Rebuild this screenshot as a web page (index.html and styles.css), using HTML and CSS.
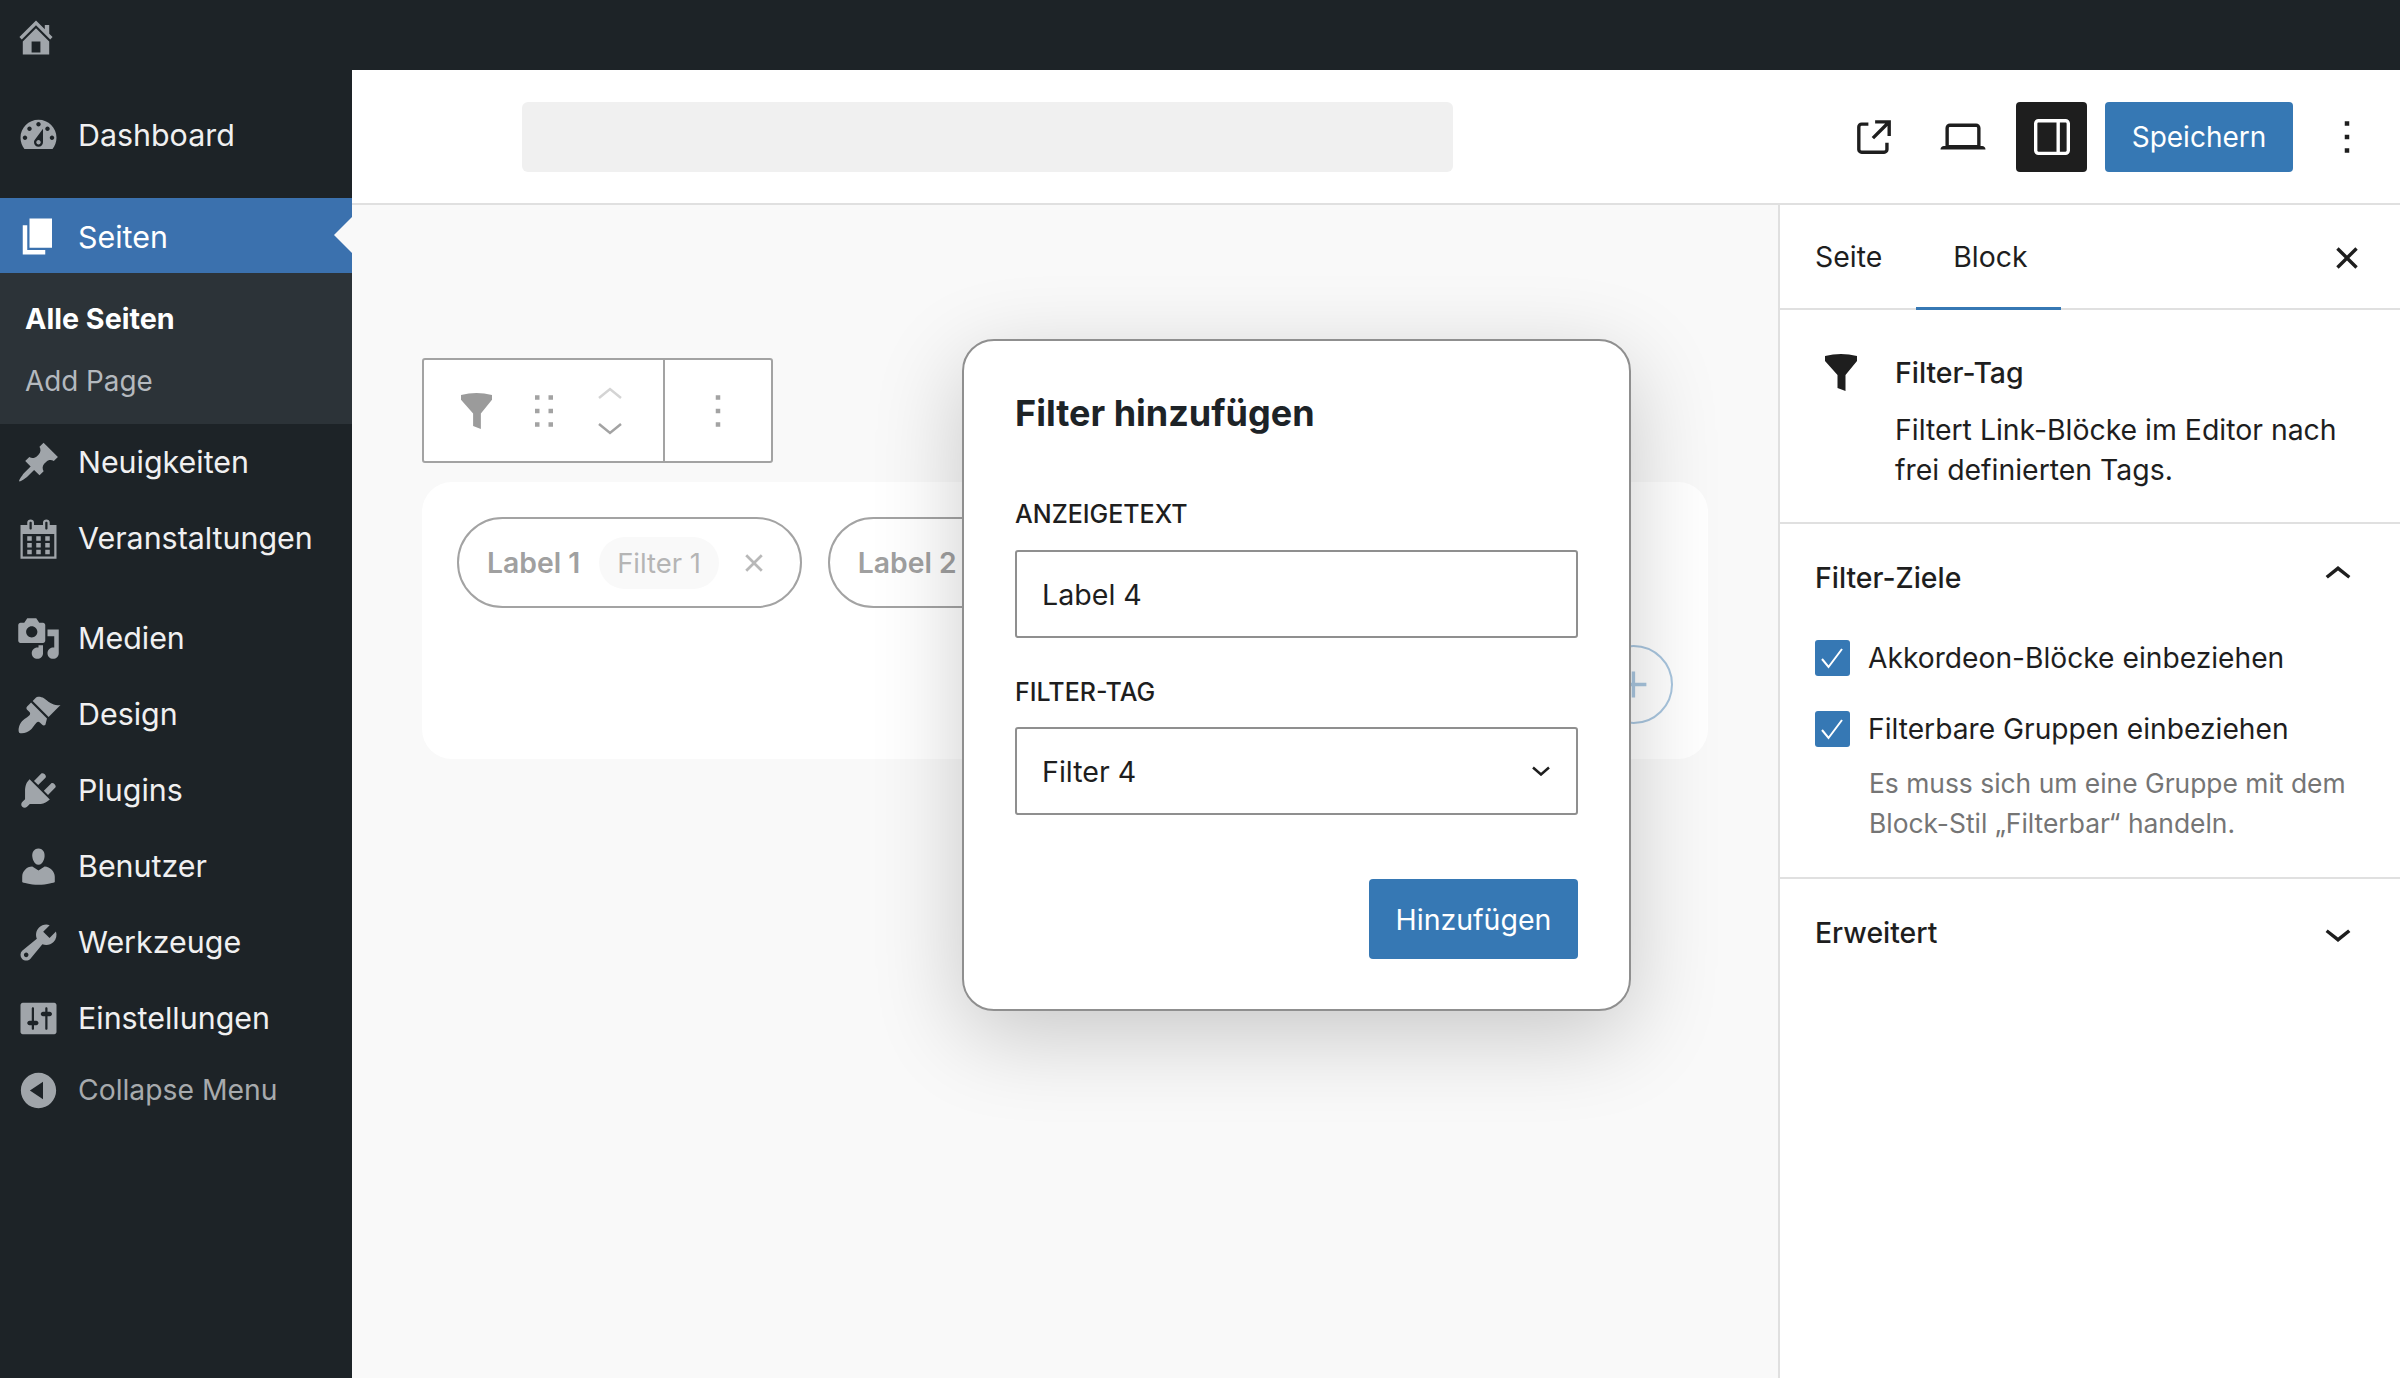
FILE: index.html
```html
<!doctype html>
<html lang="de">
  <head>
    <meta charset="utf-8">
    <title>Filter hinzufügen</title>
    <link rel="stylesheet" href="styles.css">
  </head>
  <body>
    <div class="topbar">
      <svg class="home-icon" viewBox="0 0 20 20"><path d="M16 8.5l1.53 1.53-1.06 1.06L10 4.62l-6.47 6.47-1.06-1.06L10 2.5l4 4v-2h2v4zm-6-2.46l6 5.99V18H4v-5.97zM12 17v-5H8v5h4z"/></svg>
    </div>

    <div class="app">
      <nav class="adminmenu">
        <a class="menu-item dashboard">
          <svg class="menu-icon" viewBox="0 0 20 20"><path d="M3.76 16h12.48c1.1-1.37 1.76-3.11 1.76-5 0-4.42-3.58-8-8-8s-8 3.58-8 8c0 1.89.66 3.63 1.76 5zM10 4c.55 0 1 .45 1 1s-.45 1-1 1-1-.45-1-1 .45-1 1-1zM6 6c.55 0 1 .45 1 1s-.45 1-1 1-1-.45-1-1 .45-1 1-1zm8 0c.55 0 1 .45 1 1s-.45 1-1 1-1-.45-1-1 .45-1 1-1zm-5.37 5.55L12 7v6c0 1.1-.9 2-2 2s-2-.9-2-2c0-.57.24-1.08.63-1.45zM4 10c.55 0 1 .45 1 1s-.45 1-1 1-1-.45-1-1 .45-1 1-1zm12 0c.55 0 1 .45 1 1s-.45 1-1 1-1-.45-1-1 .45-1 1-1zm-5 3c0-.55-.45-1-1-1s-1 .45-1 1 .45 1 1 1 1-.45 1-1z"/></svg>
          Dashboard
        </a>
        <a class="menu-item current">
          <svg class="menu-icon" viewBox="0 0 20 20"><path d="M6 15V2h10v13H6zm-1 1h8v2H3V5h2v11z"/></svg>
          Seiten
        </a>
        <div class="submenu">
          <a class="sub-item active">Alle Seiten</a>
          <a class="sub-item">Add Page</a>
        </div>
        <a class="menu-item">
          <svg class="menu-icon" viewBox="0 0 20 20"><path d="M10.44 3.02l1.82-1.82 6.36 6.35-1.83 1.82c-1.05-.68-2.48-.57-3.41.36l-.75.75c-.92.93-1.04 2.35-.35 3.41l-1.83 1.82-2.41-2.41-2.8 2.79c-.42.42-3.38 2.71-3.8 2.29s1.86-3.39 2.28-3.81l2.79-2.79L4.1 9.36l1.83-1.82c1.05.69 2.48.57 3.4-.36l.75-.75c.93-.92 1.05-2.35.36-3.41z"/></svg>
          Neuigkeiten
        </a>
        <a class="menu-item">
          <svg class="menu-icon" viewBox="0 0 20 20"><path d="M15 4h3v15H2V4h3V3c0-.41.15-.76.44-1.06.29-.29.65-.44 1.06-.44s.77.15 1.06.44c.29.3.44.65.44 1.06v1h4V3c0-.41.15-.76.44-1.06.29-.29.65-.44 1.06-.44s.77.15 1.06.44c.29.3.44.65.44 1.06v1zM6 3v2.5c0 .14.05.26.15.36.09.09.21.14.35.14s.26-.05.35-.14c.1-.1.15-.22.15-.36V3c0-.14-.05-.26-.15-.35-.09-.1-.21-.15-.35-.15s-.26.05-.35.15c-.1.09-.15.21-.15.35zm7 0v2.5c0 .14.05.26.14.36.1.09.22.14.36.14s.26-.05.36-.14c.09-.1.14-.22.14-.36V3c0-.14-.05-.26-.14-.35-.1-.1-.22-.15-.36-.15s-.26.05-.36.15c-.09.09-.14.21-.14.35zm4 15V8H3v10h14zM7 9v2H5V9h2zm2 0h2v2H9V9zm4 2V9h2v2h-2zm-6 1v2H5v-2h2zm2 0h2v2H9v-2zm4 2v-2h2v2h-2zm-6 1v2H5v-2h2zm4 2H9v-2h2v2zm4 0h-2v-2h2v2z"/></svg>
          Veranstaltungen
        </a>
        <a class="menu-item group-start">
          <svg class="menu-icon" viewBox="0 0 20 20"><path d="M13 11V4c0-.55-.45-1-1-1h-1.67L9 1H5L3.67 3H2c-.55 0-1 .45-1 1v7c0 .55.45 1 1 1h10c.55 0 1-.45 1-1zM7 4.5c1.38 0 2.5 1.12 2.5 2.5S8.38 9.5 7 9.5 4.5 8.38 4.5 7 5.62 4.5 7 4.5zM14 6h5v10.5c0 1.38-1.12 2.5-2.5 2.5S14 17.88 14 16.5s1.12-2.5 2.5-2.5c.17 0 .34.02.5.05V9h-3V6zm-4 8.05V13h2v3.5c0 1.38-1.12 2.5-2.5 2.5S7 17.88 7 16.5 8.12 14 9.5 14c.17 0 .34.02.5.05z"/></svg>
          Medien
        </a>
        <a class="menu-item">
          <svg class="menu-icon" viewBox="0 0 20 20"><path d="M14.48 11.06L7.41 3.99l1.5-1.5c.5-.56 2.3-.47 3.51.32 1.21.8 1.43 1.28 2.91 2.1 1.18.64 2.45 1.26 4.45.85zm-.71.71L6.7 4.7 4.93 6.47c-.39.39-.39 1.02 0 1.41l1.06 1.06c.39.39.39 1.03 0 1.42-.6.6-1.43 1.11-2.21 1.69-.35.26-.7.53-1.01.84-1.34 1.34-2 3.93-1.37 5.21 1.28.63 3.86-.03 5.25-1.38.31-.31.58-.66.84-1.01.58-.78 1.09-1.6 1.69-2.21.39-.39 1.03-.39 1.42 0l1.06 1.06c.39.39 1.02.39 1.41 0z"/></svg>
          Design
        </a>
        <a class="menu-item">
          <svg class="menu-icon" viewBox="0 0 20 20"><path d="M13.11 4.36L9.87 7.6 8 5.73l3.24-3.24c.35-.34 1.05-.2 1.56.32.52.51.66 1.21.31 1.55zm-8 1.77l.91-1.12 9.01 9.01-1.19.84c-.71.71-2.63 1.16-3.82 1.16H6.14L4.9 17.26c-.59.59-1.54.59-2.12 0-.59-.58-.59-1.53 0-2.12l1.24-1.24v-3.88c0-1.13.4-3.19 1.09-3.89zm7.26 3.97l3.24-3.24c.34-.35 1.04-.21 1.55.31.52.51.66 1.21.31 1.55l-3.24 3.25z"/></svg>
          Plugins
        </a>
        <a class="menu-item">
          <svg class="menu-icon" viewBox="0 0 20 20"><path d="M10 9.25c-2.27 0-2.73-3.44-2.73-3.44C7 4.02 7.82 2 9.97 2c2.16 0 2.98 2.02 2.71 3.81 0 0-.41 3.44-2.68 3.44zm0 2.57L12.72 10c2.39 0 4.52 2.33 4.52 4.53v2.49s-3.65 1.13-7.24 1.13c-3.65 0-7.24-1.13-7.24-1.13v-2.49c0-2.25 1.94-4.48 4.47-4.48z"/></svg>
          Benutzer
        </a>
        <a class="menu-item">
          <svg class="menu-icon" viewBox="0 0 20 20"><path d="M16.68 9.77c-1.34 1.34-3.3 1.67-4.95.99l-5.41 6.52c-.99.99-2.59.99-3.58 0s-.99-2.59 0-3.57l6.52-5.42c-.68-1.65-.35-3.61.99-4.95 1.28-1.28 3.12-1.62 4.72-1.06l-2.89 2.89 2.82 2.82 2.86-2.87c.53 1.58.18 3.39-1.08 4.65zM3.81 16.21c.4.39 1.04.39 1.43 0 .4-.4.4-1.04 0-1.43-.39-.4-1.03-.4-1.43 0-.39.39-.39 1.03 0 1.43z"/></svg>
          Werkzeuge
        </a>
        <a class="menu-item">
          <svg class="menu-icon" viewBox="0 0 20 20"><path d="M18 16V4c0-.55-.45-1-1-1H3c-.55 0-1 .45-1 1v12c0 .55.45 1 1 1h14c.55 0 1-.45 1-1zM8 11h1c.55 0 1 .45 1 1s-.45 1-1 1H8v1.5c0 .28-.22.5-.5.5s-.5-.22-.5-.5V13H6c-.55 0-1-.45-1-1s.45-1 1-1h1V5.5c0-.28.22-.5.5-.5s.5.22.5.5V11zm5-2h-1c-.55 0-1-.45-1-1s.45-1 1-1h1V5.5c0-.28.22-.5.5-.5s.5.22.5.5V7h1c.55 0 1 .45 1 1s-.45 1-1 1h-1v5.5c0 .28-.22.5-.5.5s-.5-.22-.5-.5V9z"/></svg>
          Einstellungen
        </a>
        <a class="menu-item collapse">
          <svg class="menu-icon" viewBox="0 0 20 20"><path d="M10 2.16c4.33 0 7.84 3.51 7.84 7.84s-3.51 7.84-7.84 7.84S2.16 14.33 2.16 10 5.71 2.16 10 2.16zm2 11.72V6.12L6.18 9.97z"/></svg>
          Collapse Menu
        </a>
      </nav>

      <div class="editor">
        <header class="editor-head">
          <div class="title-box"></div>
          <div class="head-tools">
            <button class="icon-btn">
              <svg viewBox="0 0 24 24"><path d="M19.5 4.5h-7V6h4.44l-5.97 5.97 1.06 1.06L18 7.06v4.44h1.5v-7Zm-13 1a2 2 0 0 0-2 2v10a2 2 0 0 0 2 2h10a2 2 0 0 0 2-2v-3H17v3a.5.5 0 0 1-.5.5h-10a.5.5 0 0 1-.5-.5v-10a.5.5 0 0 1 .5-.5h3V5.5h-3Z"/></svg>
            </button>
            <button class="icon-btn">
              <svg viewBox="0 0 24 24"><path d="M20.5 16h-.7V8c0-1.1-.9-2-2-2H6.2c-1.1 0-2 .9-2 2v8h-.7c-.8 0-1.5.7-1.5 1.5h20c0-.8-.7-1.5-1.5-1.5zM5.7 8c0-.3.2-.5.5-.5h11.6c.3 0 .5.2.5.5v7.6H5.7V8z"/></svg>
            </button>
            <button class="icon-btn pressed">
              <svg viewBox="0 0 24 24"><path fill-rule="evenodd" d="M18 4H6c-1.1 0-2 .9-2 2v12c0 1.1.9 2 2 2h12c1.1 0 2-.9 2-2V6c0-1.1-.9-2-2-2zm-4 14.5H6c-.3 0-.5-.2-.5-.5V6c0-.3.2-.5.5-.5h8v13zm4.5-.5c0 .3-.2.5-.5.5h-2.5v-13H18c.3 0 .5.2.5.5v12z"/></svg>
            </button>
            <button class="primary save">Speichern</button>
            <button class="icon-btn more">
              <svg viewBox="0 0 24 24"><path d="M13 19h-2v-2h2v2zm0-6h-2v-2h2v2zm0-6h-2V5h2v2z"/></svg>
            </button>
          </div>
        </header>

        <div class="editor-body">
          <main class="canvas">
            <div class="block-toolbar">
              <div class="toolbar-main">
                <svg class="tb-funnel" viewBox="0 0 32 38"><path d="M0 3Q16-1 32 3V8L20.5 22V38L12.5 35V22L0 8Z"/></svg>
                <svg class="tb-drag" viewBox="0 0 24 24"><path d="M8 7h2V5H8v2zm0 6h2v-2H8v2zm0 6h2v-2H8v2zm6-14v2h2V5h-2zm0 8h2v-2h-2v2zm0 6h2v-2h-2v2z"/></svg>
                <div class="tb-mover">
                  <svg class="mover-up" viewBox="0 0 24 12"><path d="M1 11L12 2 23 11"/></svg>
                  <svg class="mover-down" viewBox="0 0 24 12"><path d="M1 1L12 10 23 1"/></svg>
                </div>
              </div>
              <div class="toolbar-more">
                <svg viewBox="0 0 24 24"><path d="M13 19h-2v-2h2v2zm0-6h-2v-2h2v2zm0-6h-2V5h2v2z"/></svg>
              </div>
            </div>

            <div class="filter-card">
              <div class="chip-row">
                <div class="chip">
                  <span class="chip-label">Label 1</span>
                  <span class="chip-tag">Filter 1</span>
                  <svg class="chip-close" viewBox="0 0 24 24"><path d="M12 13.06l3.712 3.713 1.061-1.06L13.061 12l3.712-3.712-1.06-1.06L12 10.938 8.288 7.227l-1.061 1.06L10.939 12l-3.712 3.712 1.06 1.061L12 13.061z"/></svg>
                </div>
                <div class="chip">
                  <span class="chip-label">Label 2</span>
                  <span class="chip-tag">Filter 2</span>
                </div>
              </div>
              <div class="add-row">
                <div class="add-circle">
                  <svg viewBox="0 0 24 24"><path d="M11 12.5V17.5H12.5V12.5H17.5V11H12.5V6H11V11H6V12.5H11Z"/></svg>
                </div>
              </div>
            </div>

            <div class="modal">
              <h2 class="modal-title">Filter hinzufügen</h2>
              <div class="field-label first">Anzeigetext</div>
              <div class="field">Label 4</div>
              <div class="field-label">Filter-Tag</div>
              <div class="field select">
                Filter 4
                <svg viewBox="0 0 20 10"><path d="M2 1.5L10 8.5 18 1.5"/></svg>
              </div>
              <div class="modal-actions">
                <button class="primary add">Hinzufügen</button>
              </div>
            </div>
          </main>

          <aside class="panel">
            <div class="tabs">
              <span class="tab">Seite</span>
              <span class="tab selected">Block</span>
              <svg class="tabs-close" viewBox="0 0 24 24"><path d="M12 13.06l3.712 3.713 1.061-1.06L13.061 12l3.712-3.712-1.06-1.06L12 10.938 8.288 7.227l-1.061 1.06L10.939 12l-3.712 3.712 1.06 1.061L12 13.061z"/></svg>
            </div>

            <section class="block-card">
              <svg class="card-funnel" viewBox="0 0 32 38"><path d="M0 3Q16-1 32 3V8L20.5 22V38L12.5 35V22L0 8Z"/></svg>
              <div>
                <div class="card-title">Filter-Tag</div>
                <p class="card-desc">Filtert Link-Blöcke im Editor nach frei definierten Tags.</p>
              </div>
            </section>

            <section class="panel-section">
              <div class="section-head">
                Filter-Ziele
                <svg viewBox="0 0 24 24"><path d="M6.5 12.4L12 8l5.5 4.4-.9 1.2L12 10l-4.5 3.6-1-1.2z"/></svg>
              </div>
              <label class="check-row first">
                <span class="checkbox"><svg viewBox="0 0 35 35"><path d="M7 19L13.5 27 27 9"/></svg></span>
                Akkordeon-Blöcke einbeziehen
              </label>
              <label class="check-row">
                <span class="checkbox"><svg viewBox="0 0 35 35"><path d="M7 19L13.5 27 27 9"/></svg></span>
                Filterbare Gruppen einbeziehen
              </label>
              <p class="help">Es muss sich um eine Gruppe mit dem Block-Stil „Filterbar“ handeln.</p>
            </section>

            <section class="panel-section closed">
              <div class="section-head">
                Erweitert
                <svg viewBox="0 0 24 24"><path d="M17.5 11.6L12 16l-5.5-4.4.9-1.2L12 14l4.5-3.6 1 1.2z"/></svg>
              </div>
            </section>
          </aside>
        </div>
      </div>
    </div>
  </body>
</html>
```

FILE: styles.css
```css
* {
  box-sizing: border-box;
}
html, body {
  height: 100%;
}
body {
  margin: 0;
  display: flex;
  flex-direction: column;
  overflow: hidden;
  font-family: Inter, "Noto Sans", sans-serif;
  color: #1e1e1e;
  background: #1d2327;
}
button {
  font-family: inherit;
  border: 0;
  padding: 0;
  background: none;
}

.topbar {
  height: 70px;
  flex: none;
  padding: 15px 0 0 14px;
  background: #1d2327;
}
.home-icon {
  display: block;
  width: 44px;
  height: 44px;
  fill: #a0a5aa;
}

.app {
  flex: 1;
  display: flex;
  min-height: 0;
}

/* admin menu */
.adminmenu {
  width: 352px;
  flex: none;
  background: #1d2327;
}
.menu-item {
  position: relative;
  display: flex;
  align-items: center;
  gap: 17px;
  height: 76px;
  padding-left: 16px;
  font-size: 30.4px;
  color: #f0f0f1;
}
.menu-icon {
  width: 45px;
  height: 45px;
  flex: none;
  fill: #a0a5aa;
}
.dashboard {
  height: 128px;
  padding-top: 2px;
}
.current {
  height: 75px;
  padding-top: 2px;
  color: #fff;
  background: #3b71ae;
}
.current .menu-icon {
  fill: #fff;
}
.current::after {
  content: "";
  position: absolute;
  right: 0;
  top: 19px;
  border: 18px solid transparent;
  border-right-color: #f9f9f9;
  border-left-width: 0;
}
.submenu {
  height: 151px;
  padding-top: 14px;
  background: #2c3338;
}
.sub-item {
  display: block;
  height: 63px;
  line-height: 63px;
  padding-left: 25px;
  font-size: 27.8px;
  color: #b4b9be;
}
.sub-item.active {
  font-size: 28.7px;
  font-weight: 700;
  color: #fff;
}
.group-start {
  margin-top: 24px;
}
.collapse {
  height: 68px;
  color: #a7aaad;
  font-size: 28.3px;
}

/* editor */
.editor {
  flex: 1;
  display: flex;
  flex-direction: column;
  min-width: 0;
  background: #fff;
}
.editor-head {
  height: 135px;
  flex: none;
  display: flex;
  align-items: center;
  justify-content: space-between;
  padding-left: 170px;
  border-bottom: 2px solid #e0e0e0;
}
.title-box {
  width: 931px;
  height: 70px;
  border-radius: 6px;
  background: #f0f0f0;
}
.head-tools {
  display: flex;
  align-items: center;
  gap: 18px;
  padding-right: 18px;
}
.icon-btn {
  width: 71px;
  height: 70px;
  display: flex;
  align-items: center;
  justify-content: center;
  border-radius: 4px;
}
.icon-btn svg {
  width: 54px;
  height: 54px;
  fill: #1e1e1e;
}
.pressed {
  background: #1e1e1e;
}
.pressed svg {
  fill: #fff;
}
.primary {
  color: #fff;
  background: #3678b4;
  border-radius: 4px;
  font-size: 28px;
}
.save {
  width: 188px;
  height: 70px;
}

.editor-body {
  flex: 1;
  display: flex;
  min-height: 0;
}
.canvas {
  position: relative;
  flex: 1;
  padding: 153px 70px 0 70px;
  background: #f9f9f9;
  min-width: 0;
}

/* block toolbar, dimmed behind the dialog */
.block-toolbar {
  width: 351px;
  height: 105px;
  display: flex;
  border: 2px solid #a3a3a3;
  border-radius: 3px;
  background: #fff;
}
.toolbar-main {
  width: 241px;
  display: flex;
  align-items: center;
  padding-left: 37px;
  border-right: 2px solid #a3a3a3;
}
.tb-funnel {
  width: 31px;
  height: 37px;
  fill: #9b9b9b;
}
.tb-drag {
  width: 54px;
  height: 54px;
  margin-left: 25px;
  fill: #a3a3a3;
}
.tb-mover {
  display: flex;
  flex-direction: column;
  gap: 24px;
  margin-left: 27px;
}
.tb-mover svg {
  display: block;
  width: 24px;
  height: 12px;
  fill: none;
  stroke-width: 2.5;
}
.mover-up {
  stroke: #d4d4d4;
}
.mover-down {
  stroke: #a3a3a3;
}
.toolbar-more {
  flex: 1;
  display: flex;
  align-items: center;
  justify-content: center;
}
.toolbar-more svg {
  width: 54px;
  height: 54px;
  fill: #a3a3a3;
}

.filter-card {
  height: 277px;
  margin-top: 19px;
  padding: 35px;
  border-radius: 30px;
  background: #fff;
}
.chip-row {
  display: flex;
  gap: 26px;
  overflow: hidden;
}
.chip {
  height: 91px;
  flex: none;
  display: flex;
  align-items: center;
  padding: 0 24px 0 28px;
  border: 2px solid #a3a3a3;
  border-radius: 46px;
}
.chip-label {
  font-size: 28.3px;
  font-weight: 600;
  color: #a0a0a0;
}
.chip-tag {
  height: 52px;
  line-height: 52px;
  margin-left: 19px;
  padding: 0 18px;
  border-radius: 26px;
  font-size: 27.4px;
  color: #b5b5b5;
  background: #f9f9f9;
}
.chip-close {
  width: 44px;
  height: 44px;
  margin-left: 13px;
  fill: #b8b8b8;
}
.add-row {
  display: flex;
  justify-content: flex-end;
  margin-top: 37px;
}
.add-circle {
  width: 79px;
  height: 79px;
  display: flex;
  align-items: center;
  justify-content: center;
  border: 2px solid #a9c6df;
  border-radius: 50%;
}
.add-circle svg {
  width: 54px;
  height: 54px;
  fill: #a9c6df;
}

/* dialog */
.modal {
  position: absolute;
  left: 610px;
  top: 134px;
  width: 669px;
  height: 672px;
  padding: 48px 51px 0;
  border: 2px solid #8f8f8f;
  border-radius: 32px;
  background: #fff;
  box-shadow: 0 24px 90px rgba(0, 0, 0, 0.2);
}
.modal-title {
  margin: 0;
  height: 48px;
  line-height: 48px;
  font-size: 36px;
  font-weight: 700;
  color: #1d2327;
}
.field-label {
  height: 30px;
  line-height: 30px;
  margin: 39px 0 20px;
  font-size: 25px;
  font-weight: 500;
  text-transform: uppercase;
}
.field-label.first {
  margin: 62px 0 21px;
}
.field {
  height: 88px;
  display: flex;
  align-items: center;
  justify-content: space-between;
  padding: 0 25px;
  border: 2px solid #8f8f8f;
  border-radius: 3px;
  font-size: 28.6px;
}
.select svg {
  width: 20px;
  height: 10px;
  fill: none;
  stroke: #1e1e1e;
  stroke-width: 2.5;
}
.modal-actions {
  display: flex;
  justify-content: flex-end;
  margin-top: 64px;
}
.add {
  width: 209px;
  height: 80px;
  font-size: 28.5px;
}

/* settings sidebar */
.panel {
  width: 622px;
  flex: none;
  border-left: 2px solid #e0e0e0;
  background: #fff;
  font-size: 28.4px;
}
.tabs {
  position: relative;
  height: 105px;
  display: flex;
  padding-left: 35px;
  border-bottom: 2px solid #e0e0e0;
}
.tab {
  line-height: 104px;
  margin-right: 71px;
}
.tab.selected {
  position: relative;
}
.tab.selected::after {
  content: "";
  position: absolute;
  left: -37px;
  right: -33px;
  bottom: -2px;
  height: 3px;
  background: #3678b4;
}
.tabs-close {
  position: absolute;
  right: 26px;
  top: 26px;
  width: 54px;
  height: 54px;
  fill: #1e1e1e;
}
.block-card {
  height: 214px;
  display: flex;
  padding: 43px 35px 0 45px;
  border-bottom: 2px solid #e0e0e0;
}
.card-funnel {
  width: 32px;
  height: 38px;
  flex: none;
  margin-right: 38px;
  fill: #1e1e1e;
}
.card-title {
  line-height: 40px;
  font-weight: 500;
}
.card-desc {
  margin: 17px 0 0;
  line-height: 40px;
}
.panel-section {
  height: 355px;
  padding: 33px 35px 0 35px;
  border-bottom: 2px solid #e0e0e0;
}
.panel-section.closed {
  border-bottom: 0;
}
.section-head {
  height: 40px;
  display: flex;
  align-items: center;
  justify-content: space-between;
  font-weight: 500;
}
.section-head svg {
  width: 54px;
  height: 54px;
  margin: -4px 0 0;
  fill: #1e1e1e;
}
.closed .section-head svg {
  margin-top: 2px;
}
.check-row {
  display: flex;
  align-items: center;
  gap: 18px;
  height: 36px;
  margin-top: 35px;
  font-size: 28.2px;
}
.check-row.first {
  margin-top: 43px;
}
.checkbox {
  width: 35px;
  height: 36px;
  border-radius: 3px;
  background: #3678b4;
}
.checkbox svg {
  display: block;
  width: 35px;
  height: 35px;
  fill: none;
  stroke: #fff;
  stroke-width: 2;
}
.help {
  margin: 16px 0 0 54px;
  line-height: 40px;
  font-size: 26.4px;
  color: #757575;
}
```
